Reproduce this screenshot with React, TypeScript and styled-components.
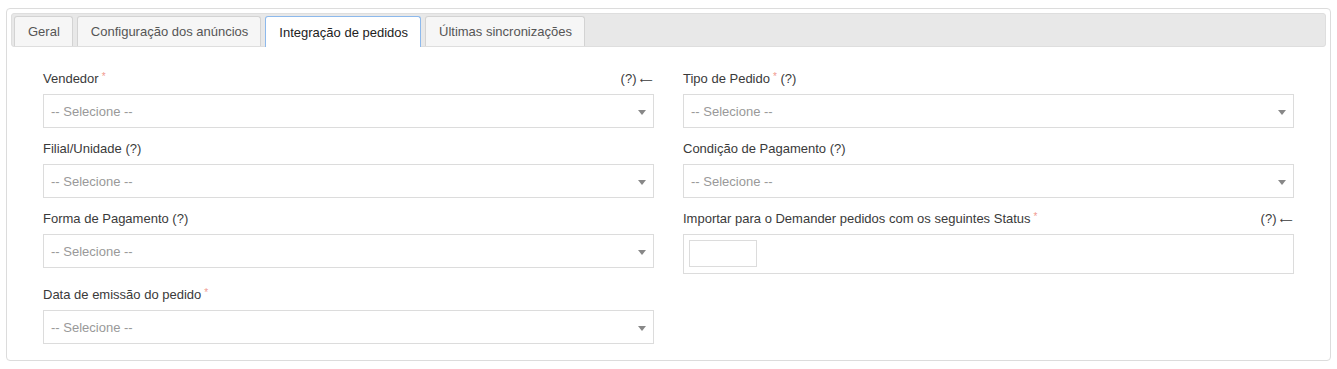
import styled, { createGlobalStyle } from 'styled-components';

const GlobalStyle = createGlobalStyle`
    body {
        margin: 0;
        background: #fff;
        font-family: "Liberation Sans", Arial, Helvetica, sans-serif;
        font-size: 13px;
        color: #333;
    }
`

interface FieldProps {
    label: string
    required?: boolean
    help?: boolean
    helpRight?: boolean
}

const tabs = ['Geral', 'Configuração dos anúncios', 'Integração de pedidos', 'Últimas sincronizações']

function Label({ label, required, help, helpRight }: FieldProps) {
    return (
        <LabelRow>
            <span>
                {label}
                {required && <Star>*</Star>}
                {help && ' (?)'}
            </span>
            {helpRight && <HelpHint>(?) <Arrow>⟵</Arrow></HelpHint>}
        </LabelRow>
    )
}

function SelectField(props: FieldProps) {
    return (
        <Group>
            <Label {...props} />
            <Select>
                <span>-- Selecione --</span>
                <Caret />
            </Select>
        </Group>
    )
}

export default function App() {
    return (
        <Page>
            <GlobalStyle />
            <Panel>
                <TabBar>
                    {tabs.map((t) => (
                        <Tab key={t} $active={t === 'Integração de pedidos'}>{t}</Tab>
                    ))}
                </TabBar>
                <Form>
                    <SelectField label="Vendedor" required helpRight />
                    <SelectField label="Tipo de Pedido" required help />
                    <SelectField label="Filial/Unidade" help />
                    <SelectField label="Condição de Pagamento" help />
                    <SelectField label="Forma de Pagamento" help />
                    <Group>
                        <Label label="Importar para o Demander pedidos com os seguintes Status" required helpRight />
                        <TagBox>
                            <TagInput />
                        </TagBox>
                    </Group>
                    <SelectField label="Data de emissão do pedido" required />
                </Form>
            </Panel>
        </Page>
    )
}

const Page = styled.div`
    padding: 8px 6px;
`

const Panel = styled.div`
    border: 1px solid #dcdcdc;
    border-radius: 4px;
    padding: 4px;
`

const TabBar = styled.div`
    display: flex;
    align-items: flex-end;
    gap: 4px;
    height: 34px;
    box-sizing: border-box;
    padding: 3px 2px 0;
    background: #e8e8e8;
    border: 1px solid #dedede;
    border-radius: 3px;
`

const Tab = styled.div<{ $active?: boolean }>`
    height: ${(p) => (p.$active ? '31px' : '30px')};
    margin-bottom: ${(p) => (p.$active ? '-1px' : '0')};
    box-sizing: border-box;
    display: flex;
    align-items: center;
    padding: 0 12px 0 13px;
    border: 1px solid ${(p) => (p.$active ? '#8db9ec' : '#d3d3d3')};
    border-bottom: none;
    border-radius: 3px 3px 0 0;
    background: ${(p) => (p.$active ? '#fff' : '#f6f6f6')};
    color: ${(p) => (p.$active ? '#222' : '#555')};
    white-space: nowrap;
    cursor: pointer;
`

const Form = styled.div`
    display: grid;
    grid-template-columns: 1fr 1fr;
    column-gap: 29px;
    padding: 23px 32px 0;
    align-items: start;
`

const Group = styled.div`
    margin-bottom: 12px;
`

const LabelRow = styled.div`
    display: flex;
    justify-content: space-between;
    height: 18px;
    line-height: 18px;
    margin-bottom: 6px;
    color: #3a3a3a;
`

const Star = styled.span`
    color: #f09a90;
    font-size: 10px;
    margin-left: 3px;
    vertical-align: top;
    line-height: 14px;
`

const HelpHint = styled.span`
    padding-right: 1px;
`

const Arrow = styled.span`
    font-family: "DejaVu Sans", sans-serif;
    font-size: 9px;
    line-height: 0;
`

const Select = styled.div`
    height: 34px;
    box-sizing: border-box;
    border: 1px solid #dcdcdc;
    background: #fff;
    display: flex;
    align-items: center;
    justify-content: space-between;
    padding: 0 7px 0 7px;
    color: #999;
    cursor: pointer;
`

const Caret = styled.span`
    width: 0;
    height: 0;
    border-left: 4px solid transparent;
    border-right: 4px solid transparent;
    border-top: 5px solid #888;
    margin-top: 2px;
`

const TagBox = styled.div`
    height: 40px;
    box-sizing: border-box;
    border: 1px solid #dcdcdc;
    padding: 5px;
`

const TagInput = styled.div`
    width: 68px;
    height: 27px;
    box-sizing: border-box;
    border: 1px solid #dcdcdc;
`
